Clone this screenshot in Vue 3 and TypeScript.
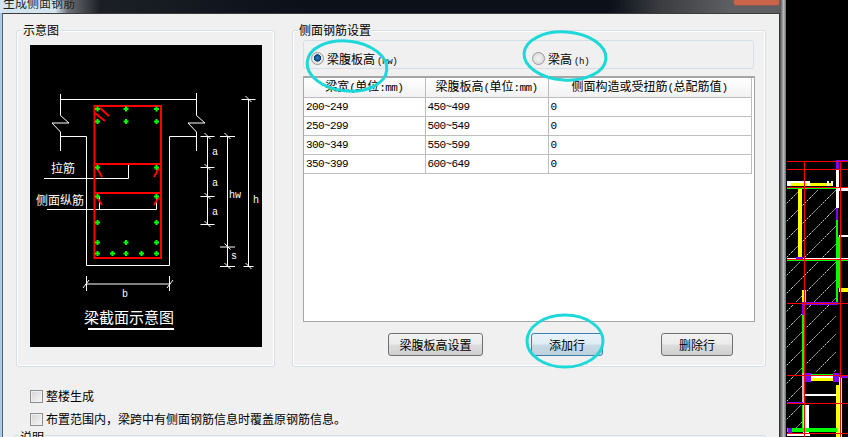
<script setup lang="ts">
// 每行: 梁宽, 梁腹板高, 侧面构造筋
const rows = [
  ['200~249', '450~499', '0'],
  ['250~299', '500~549', '0'],
  ['300~349', '550~599', '0'],
  ['350~399', '600~649', '0']
]

const dots = [
  [97.5, 109], [126, 109], [156.5, 109],
  [97.5, 121.5], [126, 121.5], [156.5, 121.5],
  [97.5, 167.5], [156.5, 167.5],
  [97.5, 196.5], [156.5, 196.5],
  [97.5, 222.5], [156.5, 222.5],
  [97.5, 242.5], [126, 242.5], [156.5, 242.5],
  [97.5, 253.5], [112.5, 253.5], [126, 253.5], [141.5, 253.5], [156.5, 253.5]
]

// 标注线的刻度 x, y, 半宽
const ticks = [
  [207.5, 136, 7], [207.5, 167, 7], [207.5, 196, 7], [207.5, 224, 7],
  [227.5, 136, 7.5], [227.5, 246.5, 7.5], [227.5, 266, 7.5],
  [248.5, 99, 7], [248.5, 266, 5]
]

const dotPath = (x: number, y: number) =>
  `M${x - 1} ${y - 2.5}h2v1.5h1.5v2h-1.5v1.5h-2v-1.5h-1.5v-2h1.5z`
</script>

<template>
  <div class="screen">
    <div class="dialog">
      <div class="titlebar">
        <span class="title">生成侧面钢筋</span>
        <span class="close"></span>
      </div>
      <div class="body">
        <div class="groups">
          <div class="group group-left">
            <span class="legend">示意图</span>
            <svg class="diagram" width="232" height="302" viewBox="30 45 232 302">
              <g fill="none" stroke="#fff" stroke-width="1">
                <path d="M60.5 94V115.5L69 123H52L60.5 132V151" />
                <path d="M196.5 93V115.5L205 123H188L196.5 132V151" />
                <path d="M60 99.5H196" />
                <path d="M60 136.5H86.5V265.5H169.5V136.5H196" />
                <path d="M44 178.5H128.5V164" />
                <path d="M47 209.5H156.5V197M99.5 197V209" />
                <path d="M207.5 136V224M227.5 136V266M248.5 99V266" />
                <path d="M86.5 276V291M169.5 276V291M86 284H170" />
                <path d="M83 288L89 280M167 288L173 280" />
                <path
                  v-for="(t, i) in ticks"
                  :key="i"
                  :d="`M${t[0] - t[2]} ${t[1] + 0.5}H${t[0] + t[2]}M${t[0] - 3} ${t[1] - 3}L${t[0] + 3} ${t[1] + 3}`"
                />
              </g>
              <g fill="none" stroke="#f00" stroke-width="2">
                <rect x="94.5" y="106" width="66.5" height="152" />
                <path d="M94 164H161M94 193H161" />
                <path d="M100 108L109 116M95 113L105 121" />
                <path d="M97 168L102 177M159 168L154 177M97 197L102 205M159 197L154 205" />
              </g>
              <path v-for="(d, i) in dots" :key="i" :d="dotPath(d[0], d[1])" fill="#0f0" />
              <g class="cad-text">
                <text x="51" y="173">拉筋</text>
                <text x="36" y="205">侧面纵筋</text>
              </g>
              <g class="cad-small">
                <text x="212" y="155">a</text>
                <text x="212" y="186">a</text>
                <text x="212" y="215">a</text>
                <text x="229" y="198">hw</text>
                <text x="253" y="203">h</text>
                <text x="231" y="259">s</text>
                <text x="122" y="297">b</text>
              </g>
              <text class="cad-title" x="84" y="323">梁截面示意图</text>
              <rect x="88" y="328" width="86" height="2" fill="#fff" />
            </svg>
          </div>

          <div class="group group-right">
            <span class="legend">侧面钢筋设置</span>
            <div class="radio-box">
              <label class="radio-item first">
                <span class="radio on"></span>
                <span>梁腹板高<span class="lat tiny">(hw)</span></span>
              </label>
              <label class="radio-item">
                <span class="radio"></span>
                <span>梁高<span class="lat tiny">(h)</span></span>
              </label>
            </div>
            <div class="table-wrap">
              <table>
                <colgroup>
                  <col class="c1" />
                  <col class="c2" />
                  <col class="c3" />
                </colgroup>
                <thead>
                  <tr>
                    <th>梁宽<span class="lat">(</span>单位<span class="lat">:mm)</span></th>
                    <th>梁腹板高<span class="lat">(</span>单位<span class="lat">:mm)</span></th>
                    <th>侧面构造或受扭筋<span class="lat">(</span>总配筋值<span class="lat">)</span></th>
                  </tr>
                </thead>
                <tbody>
                  <tr v-for="(row, i) in rows" :key="i">
                    <td v-for="(cell, j) in row" :key="j" class="lat">{{ cell }}</td>
                  </tr>
                </tbody>
              </table>
            </div>
            <div class="buttons">
              <button class="btn btn-a">梁腹板高设置</button>
              <button class="btn btn-b focus">添加行</button>
              <button class="btn btn-c">删除行</button>
            </div>
          </div>
        </div>

        <div class="checks">
          <label class="check"><span class="box"></span>整楼生成</label>
          <label class="check"><span class="box"></span>布置范围内，梁跨中有侧面钢筋信息时覆盖原钢筋信息。</label>
        </div>
        <div class="note">
          <span class="legend note-legend">说明</span>
        </div>
      </div>
    </div>

    <div class="frame-edge"></div>

    <svg class="cad" width="62" height="437" viewBox="786 0 62 437">
      <defs>
        <pattern id="hatch" width="18" height="18" patternUnits="userSpaceOnUse">
          <path d="M0 18L18 0" stroke="#ccc" stroke-width="1" stroke-dasharray="2 1" />
        </pattern>
      </defs>
      <g fill="url(#hatch)">
        <rect x="786" y="190" width="50" height="68" />
        <rect x="786" y="262" width="50" height="40" />
        <rect x="786" y="305" width="16" height="96" />
        <rect x="806" y="305" width="30" height="67" />
        <rect x="786" y="405" width="17" height="23" />
      </g>
      <g>
        <rect x="787" y="181" width="23" height="2" fill="#fff" />
        <rect x="787" y="183" width="44" height="3" fill="#ff0" />
        <rect x="787" y="183" width="4" height="3" fill="#fff" />
        <rect x="807" y="183" width="3" height="3" fill="#fff" />
        <rect x="827" y="181" width="2" height="5" fill="#fff" />
        <rect x="831" y="181" width="2" height="5" fill="#fff" />
        <rect x="787" y="187" width="53" height="2" fill="#0f0" />
        <rect x="798" y="189" width="4" height="70" fill="#ff0" />
        <rect x="836" y="160" width="12" height="2" fill="#8000ff" />
        <rect x="836" y="162" width="3" height="8" fill="#8000ff" />
        <rect x="836" y="170" width="3" height="38" fill="#fff" />
        <rect x="836" y="208" width="2" height="12" fill="#8000ff" />
        <rect x="836" y="220" width="2" height="83" fill="#0f0" />
        <rect x="838" y="188" width="10" height="3" fill="#fff" />
        <rect x="839" y="235" width="9" height="2" fill="#fff" />
        <rect x="838" y="237" width="2" height="51" fill="#0f0" />
        <rect x="787" y="258" width="61" height="2" fill="#fff" />
        <rect x="787" y="260" width="61" height="1" fill="#0f0" />
        <rect x="796" y="257" width="7" height="2" fill="#8000ff" />
        <rect x="802" y="290" width="4" height="13" fill="#ff0" />
        <rect x="839" y="288" width="9" height="4" fill="#ff0" />
        <rect x="802" y="302" width="36" height="3" fill="#8000ff" />
        <rect x="808" y="303" width="22" height="1" fill="#ddd" />
        <rect x="802" y="305" width="3" height="10" fill="#8000ff" />
        <rect x="802" y="315" width="3" height="58" fill="#0f0" />
        <rect x="802" y="373" width="2" height="30" fill="#bbb" />
        <rect x="805" y="374" width="34" height="1" fill="#0f0" />
        <rect x="805" y="376" width="34" height="2" fill="#fff" />
        <rect x="810" y="378" width="23" height="3" fill="#ff0" />
        <rect x="804" y="373" width="7" height="9" fill="#8000ff" />
        <rect x="833" y="373" width="6" height="9" fill="#8000ff" />
        <rect x="805" y="394" width="35" height="2" fill="#fff" />
        <rect x="836" y="385" width="3" height="52" fill="#ff0" />
        <rect x="839" y="377" width="3" height="60" fill="#fff" />
        <rect x="841" y="376" width="7" height="2" fill="#8000ff" />
        <rect x="787" y="402" width="16" height="2" fill="#8000ff" />
        <rect x="802" y="405" width="1" height="23" fill="#0f0" />
        <rect x="803" y="405" width="3" height="30" fill="#ff0" />
        <rect x="806" y="405" width="3" height="30" fill="#fff" />
        <rect x="787" y="428" width="50" height="4" fill="#0f0" />
        <rect x="788" y="428" width="4" height="7" fill="#8000ff" />
        <rect x="787" y="433" width="23" height="3" fill="#fff" />
      </g>
      <g stroke="#f00" stroke-width="1">
        <path d="M787 161.5H848M787 169.5H848M787 187.5H848M787 259.5H848M787 303.5H848M787 375.5H848M787 403.5H848M787 433.5H848" />
        <path d="M804.5 161V437M840.5 161V437" />
      </g>
    </svg>

    <svg class="marks" width="848" height="437" viewBox="0 0 848 437">
      <g fill="none" stroke="#1dd8d8" stroke-width="3">
        <ellipse cx="347" cy="66" rx="40" ry="25" transform="rotate(6 347 66)" />
        <ellipse cx="565" cy="56" rx="41" ry="24" transform="rotate(4 565 56)" />
        <ellipse cx="565" cy="341" rx="38" ry="26" />
      </g>
    </svg>
  </div>
</template>

<style>
html,
body {
  background: #000;
  overflow: hidden;
}
</style>

<style scoped>
.screen {
  position: relative;
  display: flex;
  width: 848px;
  height: 437px;
  overflow: hidden;
  background: #000;
  font-family: 'Noto Sans CJK SC', 'Liberation Sans', sans-serif;
  font-size: 12px;
  color: #000;
}

.dialog {
  display: flex;
  flex-direction: column;
  box-sizing: border-box;
  width: 780px;
  flex: none;
  border-left: 2px solid #a9c9e6;
}

.titlebar {
  position: relative;
  height: 13px;
  margin-left: -2px;
  overflow: hidden;
  background: linear-gradient(90deg, #d4e5f2 0, #d4e5f2 55px, #6b6f74 68px, #1c2026 100px, #0b1019 300px, #0b1019 610px, #3a3c40 660px, #5d5f62 730px);
}

.title {
  position: absolute;
  left: 3px;
  top: -5px;
  line-height: 16px;
  color: #222;
}

.close {
  position: absolute;
  left: 733px;
  top: -3px;
  width: 45px;
  height: 7px;
  border: 1px solid #8a5a4e;
  border-radius: 3px;
  background: #c9634a;
}

.body {
  flex: 1;
  padding: 16px 13px 0 13px;
  border-top: 1px solid #3c3c3c;
  border-left: 1px solid #5a5f63;
  border-right: 1px solid #333;
  background: #f0f0f0;
  min-height: 0;
}

.groups {
  display: flex;
  gap: 17px;
  height: 337px;
}

.group {
  position: relative;
  flex: none;
  box-sizing: border-box;
  height: 337px;
  border: 1px solid #d5dfe5;
  border-radius: 3px;
  box-shadow: inset 0 0 0 1px #fff;
}

.group-left {
  width: 259px;
  padding: 14px 13px;
}

.group-right {
  width: 474px;
  padding: 9px 10px;
}

.legend {
  position: absolute;
  top: -9px;
  left: 5px;
  padding: 0 1px;
  background: #f0f0f0;
  line-height: 16px;
}

.diagram {
  display: block;
  background: #000;
}

.cad-text text {
  font-size: 12px;
  fill: #fff;
}

.cad-small text {
  font-family: 'Liberation Mono', monospace;
  font-size: 10px;
  fill: #fff;
}

.cad-title {
  font-size: 15px;
  fill: #fff;
}

.radio-box {
  display: flex;
  align-items: center;
  box-sizing: border-box;
  width: 451px;
  height: 29px;
  padding: 8px 0 0 7px;
  border: 1px solid #d5dfe5;
  border-radius: 3px;
}

.radio-item {
  display: flex;
  align-items: center;
  gap: 3px;
}

.radio-item.first {
  width: 221px;
}

.radio {
  box-sizing: border-box;
  width: 13px;
  height: 13px;
  border: 1px solid #9a9a9a;
  border-radius: 50%;
  background: radial-gradient(circle at 50% 50%, #f4f4f4 0, #d2d2d2 100%);
}

.radio.on {
  background: radial-gradient(circle at 50% 45%, #2f8ccf 0, #0d4a86 35%, #0d3f70 42%, #e6e6e6 48%);
}

.lat {
  font-family: 'Liberation Mono', monospace;
  font-size: 11px;
  letter-spacing: -0.6px;
}

.lat.tiny {
  font-size: 9px;
  letter-spacing: -0.3px;
  margin-left: 2px;
}

.table-wrap {
  box-sizing: border-box;
  width: 452px;
  height: 246px;
  margin-top: 7px;
  border: 1px solid #a6a6a6;
  border-top-width: 2px;
  background: #fff;
}

table {
  width: 447px;
  border-collapse: collapse;
  table-layout: fixed;
}

.c1 {
  width: 121px;
}

.c2 {
  width: 123px;
}

.c3 {
  width: 203px;
}

th,
td {
  box-sizing: border-box;
  height: 19px;
  padding: 0 2px;
  border-right: 1px solid #bdbdbd;
  border-bottom: 1px solid #bdbdbd;
  white-space: nowrap;
  overflow: hidden;
  line-height: 16px;
}

th {
  font-weight: 400;
  text-align: center;
  background: linear-gradient(#fff, #f1f1f1);
}

td {
  color: #000;
}

.buttons {
  position: relative;
  display: flex;
  height: 23px;
  margin-top: 11px;
  padding-left: 85px;
}

.btn {
  box-sizing: border-box;
  height: 23px;
  padding: 0;
  border: 1px solid #707070;
  border-radius: 3px;
  background: linear-gradient(#f2f2f2 0, #ebebeb 48%, #dddddd 52%, #cfcfcf 100%);
  font-family: inherit;
  font-size: 12px;
  color: #000;
}

.btn-a {
  width: 95px;
}

.btn-b {
  width: 72px;
  margin-left: 48px;
}

.btn-c {
  width: 72px;
  margin-left: 58px;
}

.btn.focus {
  border-color: #3c7fb1;
  background: linear-gradient(#e9f3f9 0, #dcecf5 48%, #c9dbe6 52%, #bdd0dc 100%);
}

.checks {
  display: flex;
  flex-direction: column;
  gap: 9px;
  margin-top: 22px;
  padding-left: 14px;
}

.check {
  display: flex;
  align-items: center;
  gap: 3px;
  height: 14px;
  line-height: 14px;
}

.box {
  box-sizing: border-box;
  width: 13px;
  height: 13px;
  border: 1px solid #8e8e8e;
  background: linear-gradient(135deg, #d4d4d4, #f6f6f6);
  box-shadow: inset 0 0 0 1px #f0f0f0;
}

.note {
  position: relative;
  height: 20px;
  margin-top: 9px;
  margin-left: -3px;
  border: 1px solid #d5dfe5;
  border-radius: 3px;
}

.note-legend {
  left: 5px;
  top: -7px;
}

.frame-edge {
  flex: none;
  width: 6px;
  height: 437px;
  background: linear-gradient(90deg, #4a4d50, #b8bcbc 60%, #6a6d70);
}

.cad {
  flex: none;
  display: block;
}

.marks {
  position: absolute;
  left: 0;
  top: 0;
  pointer-events: none;
}
</style>
